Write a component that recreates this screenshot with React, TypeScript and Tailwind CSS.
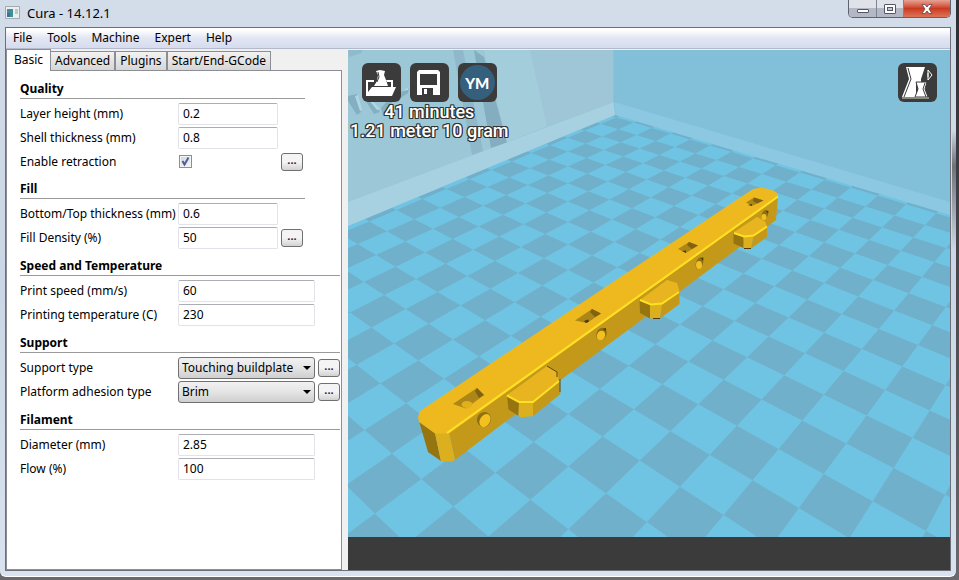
import type { ReactNode } from 'react';

type Field = {
  id: string;
  label: string;
  value?: string;
  options?: string[];
  checked?: boolean;
  more?: boolean;
};

type Section = { title: string; wide: boolean; fields: Field[] };

const sections: Section[] = [
  {
    title: 'Quality',
    wide: false,
    fields: [
      { id: 'layer-height', label: 'Layer height (mm)', value: '0.2' },
      { id: 'shell', label: 'Shell thickness (mm)', value: '0.8' },
      { id: 'retraction', label: 'Enable retraction', checked: true, more: true },
    ],
  },
  {
    title: 'Fill',
    wide: false,
    fields: [
      { id: 'bottom-top', label: 'Bottom/Top thickness (mm)', value: '0.6' },
      { id: 'density', label: 'Fill Density (%)', value: '50', more: true },
    ],
  },
  {
    title: 'Speed and Temperature',
    wide: true,
    fields: [
      { id: 'speed', label: 'Print speed (mm/s)', value: '60' },
      { id: 'temp', label: 'Printing temperature (C)', value: '230' },
    ],
  },
  {
    title: 'Support',
    wide: true,
    fields: [
      { id: 'support', label: 'Support type', options: ['Touching buildplate', 'None', 'Everywhere'], more: true },
      { id: 'adhesion', label: 'Platform adhesion type', options: ['Brim', 'None', 'Raft'], more: true },
    ],
  },
  {
    title: 'Filament',
    wide: true,
    fields: [
      { id: 'diameter', label: 'Diameter (mm)', value: '2.85' },
      { id: 'flow', label: 'Flow (%)', value: '100' },
    ],
  },
];

// floor plane -> canvas, one unit is one square of the checkerboard
function project(i: number, j: number) {
  const w = -0.038063 * i + 0.046923 * j + 1;
  const x = (12.434 * i + 60.656 * j + 670.35) / w;
  const y = (6.3 * i - 7.86 * j + 431.16) / w;
  return { x, y, w };
}

const EDGE_I = -13.25;
const EDGE_J = 13.2;

function darkSquares() {
  let d = '';
  for (let i = -14; i < 12; i++) {
    for (let j = -16; j < 14; j++) {
      if ((i + j) % 2 === 0) continue;
      const i0 = Math.max(i, EDGE_I);
      const j1 = Math.min(j + 1, EDGE_J);
      const corners = [project(i0, j), project(i + 1, j), project(i + 1, j1), project(i0, j1)];
      if (corners.some((c) => c.w < 0.2)) continue;
      d += 'M' + corners.map((c) => `${c.x.toFixed(1)} ${c.y.toFixed(1)}`).join('L') + 'Z';
    }
  }
  return d;
}

const floorPath = darkSquares();

function Scene() {
  return (
    <svg className="absolute inset-0 h-full w-full" viewBox="348 50 602 520" preserveAspectRatio="xMidYMid slice" aria-hidden="true">
      <rect x="0" y="0" width="1400" height="537" fill="#70c4e3" />
      <path d={floorPath} fill="#70b0ca" />

      {/* left wall */}
      <path d="M0 -20H613.500V102L615.500 115L0 369Z" fill="#9cc7d7" />
      <path d="M484 50H530L547 126L507 142Z" fill="#a4cddc" />
      <path d="M530 50H613.500V102L547 126Z" fill="#9fc6d6" />
      <path d="M453 50H463L483 151L472 155Z" fill="#8fb9ca" />
      <path d="M474 50L484 57L507 143L491 148Z" fill="#84aec0" />
      <path d="M348 202L614.500 102V115L348 226Z" fill="#a7d0e0" />
      <path d="M348 50H362V53L349 57Z" fill="#8fbccd" />
      <g fill="#82b0c2">
        <path d="M348 96L357 94L361 112L357 115L348 101Z" />
        <path d="M364 98L369 97L380 112L374 114Z" />
        <path d="M381 108L390 98L394 100L383 116Z" />
        <path d="M397 94L409 88L408 93L399 99Z" />
      </g>
      <g fill="#b2d5e2">
        <path d="M355 96L358 95L362 110L360 111Z" />
        <path d="M368 99L371 99L380 109L377 110Z" />
        <path d="M402 91L409 87L408 90Z" />
      </g>

      {/* right wall */}
      <path d="M613.500 -20H1400V336L615.500 115L613.500 102Z" fill="#82bfd8" />
      <path d="M614.500 102L950 202L1400 336V349L950 215L615.500 115Z" fill="#8cc8e1" />

      {/* body */}
      <path d="M449 433L778 197L776 220L764 229L562 379L455 460Z" fill="#c4991a" />
      <path d="M419 421L435 433L441 461L428 452Z" fill="#967511" />
      <path d="M435 433H449L455 460L452 461.500H441Z" fill="#dcaf1f" />
      <path d="M418 417L420 411L426 407L601 290L753 189L762 187.500L773 190.500L778 193.500V197.500L449 433.500H435L419 422Z" fill="#eeb91f" />
      <path d="M447 433L778 196.500" stroke="#ffe022" strokeWidth="2" fill="none" />

      {/* slots */}
      <g fill="#ac8616">
        <path d="M453 404L477 388L484 395L466 408.500Z" />
        <path d="M575 320.500L592 309L601 313.500L587 323Z" />
        <path d="M678 249L689 242L698 245.500L686 253Z" />
        <path d="M746 202.500L754 197.500L763.500 200.500L752 206Z" />
      </g>
      <g fill="#806310">
        <path d="M477 388L484 395L479 398L475 391Z" />
        <path d="M592 309L601 313.500L595 317L590 312Z" />
        <path d="M689 242L698 245.500L692 249L687 245Z" />
        <path d="M754 197.500L763.500 200.500L757 203.500L753 201Z" />
      </g>
      <ellipse cx="467" cy="404.500" rx="5.500" ry="3.500" fill="#e0b01e" />
      <g fill="#4d3b08">
        <path d="M584 321L588 319.500L589 321.500L586 323Z" />
        <path d="M682 251L686 250.500L686 253Z" />
        <path d="M748 205L752 204L752 206Z" />
      </g>

      {/* pin holes */}
      <g fill="#8f6f12">
        <ellipse cx="484" cy="419.500" rx="7" ry="7.500" transform="rotate(30 484 419.500)" />
        <ellipse cx="601.500" cy="334" rx="5" ry="6.500" transform="rotate(25 601.500 334)" />
        <ellipse cx="699.500" cy="263" rx="3.500" ry="6" transform="rotate(20 699.500 263)" />
        <ellipse cx="765" cy="214.500" rx="3" ry="5" transform="rotate(20 765 214.500)" />
      </g>
      <g fill="#f2c021">
        <ellipse cx="485" cy="420.500" rx="5" ry="7" transform="rotate(30 485 420.500)" />
        <ellipse cx="601" cy="335.500" rx="4" ry="5" transform="rotate(25 601 335.500)" />
        <ellipse cx="699" cy="265" rx="3" ry="4" />
        <ellipse cx="764" cy="217" rx="2.500" ry="3" />
      </g>
      <path d="M603 329L606 328L606 331ZM701 258L703.500 257.500L703 261ZM766 211L768.500 211L768 213.500Z" fill="#4d3b08" />

      {/* clips */}
      <path d="M507 395L547 366L557 372L559 381L533 402H519Z" fill="#e8b520" />
      <path d="M507 396L519 402.500L518.500 416L508.500 409.500Z" fill="#967511" />
      <path d="M519 402.500H533V416L521 417.500L518.500 416Z" fill="#dcaf1f" />
      <path d="M533 402.500L559.500 381.500L560.500 394L533 416Z" fill="#c4991a" />
      <path d="M507 395.500L519 402H533L559 381" stroke="#ffe022" strokeWidth="2" fill="none" />
      <path d="M547 366L557 372V377M560 379V392" stroke="#5c470c" fill="none" />

      <path d="M640 300L667 280L677 283L679.500 291L661 304.500H650Z" fill="#e8b520" />
      <path d="M639.500 300.500L650 305V318.500L640 313Z" fill="#967511" />
      <path d="M650 305L662 304L660 318.500H650Z" fill="#dcaf1f" />
      <path d="M662 304L679.500 292V304L660 318.500Z" fill="#c4991a" />
      <path d="M640 300L651 304.500L662 303.500L679 292" stroke="#ffe022" strokeWidth="2" fill="none" />
      <path d="M653 318.500H660" stroke="#4d3b08" />

      <path d="M734 232L757 217L765 221.500L767 226.500L753 236H744Z" fill="#e8b520" />
      <path d="M733.500 233L743.500 237V248L733.500 243.500Z" fill="#967511" />
      <path d="M743.500 237L753.500 236L751 248.500H744Z" fill="#dcaf1f" />
      <path d="M753.500 236L767 227V237L751 248.500Z" fill="#c4991a" />
      <path d="M734 233L744 236.500L753.500 235.500L767 226.500" stroke="#ffe022" strokeWidth="2" fill="none" />
      <path d="M744 248.500H751" stroke="#4d3b08" />

      <rect x="0" y="537" width="1400" height="300" fill="#3b3b3b" />
    </svg>
  );
}

function ToolButton({ label, children }: { label: string; children: ReactNode }) {
  return (
    <button aria-label={label} className="size-[39px] overflow-hidden rounded-md bg-[#3b3b3b]">
      {children}
    </button>
  );
}

function OpenIcon() {
  return (
    <svg viewBox="0 0 39 39" className="size-full">
      <path d="M4 33V17H12V19H6V29L10 24H34L30 33Z" fill="#fff" />
      <path d="M24 17H31V24H29V19H25Z" fill="#fff" />
      <path d="M14 8L18 7L23 8L22 12L24 17L26 23H12L15 18L16 12Z" fill="#fff" />
      <path d="M16 9L17 14L15 19" stroke="#3b3b3b" fill="none" />
    </svg>
  );
}

function SaveIcon() {
  return (
    <svg viewBox="0 0 39 39" className="size-full">
      <path d="M9 7H28L30 9V32H7V9Z" fill="#fff" />
      <path d="M10 11H27V22H10ZM12 25H25V32H12Z" fill="#3b3b3b" />
      <path d="M14 26H17V31H14ZM23 25H26V32H23Z" fill="#fff" />
    </svg>
  );
}

function ViewIcon() {
  return (
    <svg viewBox="0 0 39 39" className="size-full">
      <path d="M8 4H27L23 16V19H18V34H4L11 16Z" fill="#fff" />
      <path d="M10 5L13 16L6 34" stroke="#3b3b3b" fill="none" />
      <path d="M18 19H29L27 26L30 34H17L20 26Z" fill="#fff" stroke="#3b3b3b" />
      <path d="M27 20L25 26L28 34" stroke="#3b3b3b" fill="none" />
      <path d="M4 35H31" stroke="#d8dcc4" />
      <path d="M30 7L34 12L30 17Z" fill="#3b3b3b" stroke="#fff" />
      <path d="M30 10V14" stroke="#fff" />
    </svg>
  );
}

function MoreButton({ label }: { label: string }) {
  return (
    <button
      aria-label={`${label} settings`}
      className="ml-[3px] h-[18px] w-[22px] shrink-0 rounded-[3px] border border-[#707070] bg-linear-to-b from-[#f4f4f4] from-50% to-[#d2d2d2] pb-1 text-[11px] leading-3 font-bold text-[#301838]"
    >
      ...
    </button>
  );
}

function FieldRow({ field, wide }: { field: Field; wide: boolean }) {
  const width = wide ? 'w-[137px]' : 'w-[100px]';
  return (
    <div className={`flex items-center ${field.checked ? 'h-[23px]' : 'h-6'}`}>
      <label htmlFor={field.id} className="w-[158px] shrink-0 whitespace-nowrap">
        {field.label}
      </label>
      {field.value && (
        <input
          id={field.id}
          type="text"
          defaultValue={field.value}
          className={`h-[22px] ${width} rounded-[2px] border border-[#e2e3ea] border-t-[#abadb3] bg-white px-1 pb-px`}
        />
      )}
      {field.checked && (
        <div className={`flex ${width} items-center pl-px`}>
          <input
            id={field.id}
            type="checkbox"
            defaultChecked
            className="peer size-[13px] appearance-none border border-[#8e8f8f] bg-linear-to-br from-[#cfd6de] to-[#f6f8fa] shadow-[inset_0_0_0_1px_#f4f4f4]"
          />
          <svg viewBox="0 0 13 13" className="pointer-events-none -ml-[13px] size-[13px] opacity-0 peer-checked:opacity-100">
            <path d="M3.500 6L5.500 9.500L9.500 2.500" stroke="#4b5f97" strokeWidth="2" fill="none" />
          </svg>
        </div>
      )}
      {field.options && (
        <div className={`relative ${width}`}>
          <select
            id={field.id}
            className="block h-[22px] w-full appearance-none rounded-[3px] border border-[#707070] bg-linear-to-b from-[#f2f2f2] via-[#e4e4e4] to-[#cfcfcf] pb-px pl-[3px]"
          >
            {field.options.map((o) => (
              <option key={o}>{o}</option>
            ))}
          </select>
          <span className="pointer-events-none absolute top-[9px] right-1 border-x-4 border-t-4 border-x-transparent border-t-black" />
        </div>
      )}
      {field.more && <MoreButton label={field.label} />}
    </div>
  );
}

function SettingsPanel() {
  return (
    <div className="-mt-px flex-1 border border-[#8c8e96] bg-white pl-[13px] pt-[2px]">
      {sections.map((s) => (
        <section key={s.title} className={s.wide ? 'w-[320px]' : 'w-[285px]'}>
          <h2 className="mb-[3px] flex h-[26px] items-end border-b border-[#9a9a9a] leading-[18px] font-bold">{s.title}</h2>
          {s.fields.map((f) => (
            <FieldRow key={f.id} field={f} wide={s.wide} />
          ))}
        </section>
      ))}
    </div>
  );
}

function Tabs() {
  const rest = ['Advanced', 'Plugins', 'Start/End-GCode'];
  return (
    <div role="tablist" className="flex h-[22px] items-end">
      <button role="tab" aria-selected="true" className="relative h-[22px] w-[45px] border border-b-0 border-[#8c8e96] bg-white pb-px">
        Basic
      </button>
      {rest.map((t) => (
        <button
          key={t}
          role="tab"
          aria-selected="false"
          className="h-5 border border-l-0 border-[#8c8e96] bg-linear-to-b from-[#f2f2f2] to-[#d6d6d6] px-1 whitespace-nowrap nth-[n+3]:border-l"
        >
          {t}
        </button>
      ))}
    </div>
  );
}

function TitleBar() {
  return (
    <header className="flex h-[27px] shrink-0 items-start justify-between">
      <div className="flex h-[25px] items-center gap-[7px] text-[13px]">
        <svg viewBox="0 0 15 13" className="h-[13px] w-[15px]">
          <path d="M.5.5H14.500V12.500H.5Z" fill="#eceff0" stroke="#a3a9ad" />
          <path d="M2 3H8V11H2Z" fill="#3f8f94" />
          <path d="M2 7H5V11H2Z" fill="#3c6ea5" />
          <path d="M10 3H13V8H10Z" fill="#b9cdbd" />
        </svg>
        <h1>Cura - 14.12.1</h1>
      </div>
      <div className="flex h-[18px] overflow-hidden rounded-b-[5px] border border-t-0 border-[#5d6470]">
        <button aria-label="Minimize" className="flex w-[28px] items-center justify-center border-r border-[#7d8490] bg-linear-to-b from-[#dfe2e9] from-45% to-[#b3b8c4] to-50%">
          <span className="mt-1 h-1 w-3 rounded-[1px] border border-[#535666] bg-white" />
        </button>
        <button aria-label="Maximize" className="flex w-[27px] items-center justify-center border-r border-[#7d8490] bg-linear-to-b from-[#dfe2e9] from-45% to-[#b3b8c4] to-50%">
          <span className="flex h-[10px] w-3 items-center justify-center rounded-[1px] border border-[#535666] bg-white">
            <span className="h-1 w-[6px] border border-[#535666] bg-[#c5c9d3]" />
          </span>
        </button>
        <button aria-label="Close" className="flex w-[46px] items-center justify-center bg-linear-to-b from-[#e8a294] via-[#c93a20] via-50% to-[#dd7256]">
          <svg viewBox="0 0 12 10" className="h-[10px] w-3">
            <path d="M1 .5H4L6 3L8 .5H11L8 5L11 9.500H8L6 7L4 9.500H1L4 5Z" fill="#fff" stroke="#5b4450" strokeWidth=".8" />
          </svg>
        </button>
      </div>
    </header>
  );
}

export default function App() {
  return (
    <div className="h-screen min-h-[520px] bg-linear-to-b from-[#2c2d31] to-[#6a6a6e] pr-[3px] pb-[3px] font-['Noto_Sans',sans-serif] text-[12px] leading-4 text-black">
      <div className="relative flex h-full flex-col rounded-[6px] rounded-t-none border-b border-white bg-linear-to-b from-[#d3dce9] via-[#cbd7e6] to-[#d9e3ef] pr-[5px] pb-[5px] pl-[5px]">
        {/* window behind showing through the glass border */}
        <span className="absolute top-[130px] right-0 h-[120px] w-1 bg-linear-to-b from-transparent via-[#6f7278] via-30% to-transparent" />
        <TitleBar />
        <main className="flex min-h-0 flex-1 flex-col border border-[#6d7078] bg-[#f0f0f0]">
          <nav className="flex h-[21px] shrink-0 items-center gap-[15px] border-b border-[#b5b9cc] bg-linear-to-b from-white from-10% via-[#e2e6f3] via-50% to-[#d6dcee] pl-[7px]">
            {['File', 'Tools', 'Machine', 'Expert', 'Help'].map((m) => (
              <button key={m}>{m}</button>
            ))}
          </nav>
          <div className="flex min-h-0 flex-1">
            <div className="mr-[6px] flex w-[336px] shrink-0 flex-col">
              <Tabs />
              <SettingsPanel />
            </div>
            <div className="relative mt-px min-w-0 flex-1 overflow-hidden">
              <Scene />
              <div className="relative flex justify-between pt-[13px] pr-[13px] pl-[2px]">
                <div className="flex flex-col items-center">
                  <div className="flex gap-[9px]">
                    <ToolButton label="Load model">
                      <OpenIcon />
                    </ToolButton>
                    <ToolButton label="Save toolpath">
                      <SaveIcon />
                    </ToolButton>
                    <ToolButton label="Share on YouMagine">
                      <span className="mx-auto flex size-[35px] items-center justify-center rounded-full bg-[#345f7d] font-['Lato',sans-serif] text-[15px] font-black text-white">
                        YM
                      </span>
                    </ToolButton>
                  </div>
                  <div className="text-center font-['Roboto',sans-serif] text-[18px] leading-[19px] font-medium text-white [text-shadow:1px_0_#333,-1px_0_#333,0_1px_#333,0_-1px_#333,1px_1px_#333,-1px_-1px_#333,1px_-1px_#333,-1px_1px_#333]">
                    <p>41 minutes</p>
                    <p>1.21 meter 10 gram</p>
                  </div>
                </div>
                <ToolButton label="View mode">
                  <ViewIcon />
                </ToolButton>
              </div>
            </div>
          </div>
        </main>
      </div>
    </div>
  );
}
